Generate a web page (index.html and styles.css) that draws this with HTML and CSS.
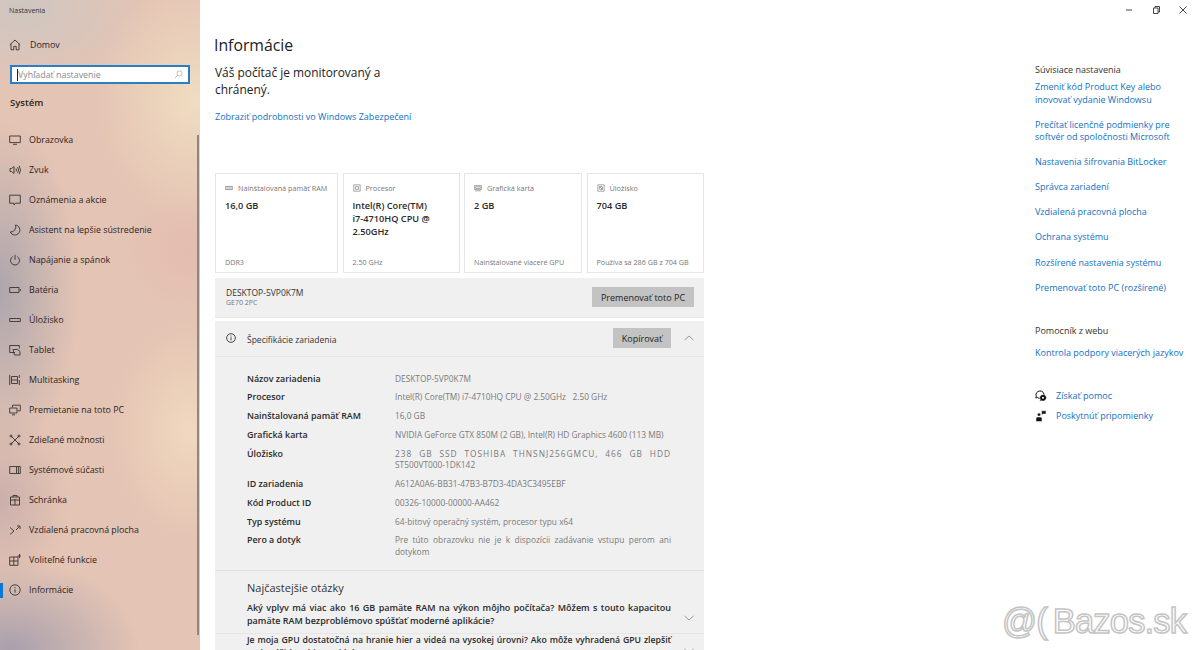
FILE: index.html
```html
<!DOCTYPE html>
<html lang="sk">
<head>
    <meta charset="UTF-8">
    <title>Nastavenia</title>
    <link rel="stylesheet" href="styles.css">
</head>
<body>
    <div class="window">
        <aside class="sidebar">
            <div class="app-title">Nastavenia</div>
            <a class="nav-item home">
                <svg class="nav-icon" viewBox="0 0 12 12"><path d="M.8 5.800 6 1l5.200 4.800M2 4.800v6h2.800V7.400h2.400v3.400H10v-6"/></svg>
                <span>Domov</span>
            </a>
            <div class="search">
                <span class="caret"></span>
                <span class="search-text">Vyhľadať nastavenie</span>
                <svg class="search-icon" viewBox="0 0 12 12"><circle cx="7.400" cy="4.600" r="3.400"/><path d="M5 7 1.200 10.800"/></svg>
            </div>
            <div class="section-name">Systém</div>
            <nav class="nav-list">
                <a class="nav-item">
                    <svg class="nav-icon" viewBox="0 0 12 12"><path d="M.7 2h10.600v6.600H.7zM4 10.300h4"/></svg>
                    <span>Obrazovka</span>
                </a>
                <a class="nav-item">
                    <svg class="nav-icon" viewBox="0 0 12 12"><path d="M1 4.500h1.500L5 2.500v7l-2.500-2H1zM7 4.500q1 1.500 0 3M8.600 3q2 3 0 6M10.200 1.800q2.600 4.200 0 8.400"/></svg>
                    <span>Zvuk</span>
                </a>
                <a class="nav-item">
                    <svg class="nav-icon" viewBox="0 0 12 12"><path d="M.7 1.200h10.600v8H6.600L5 11V9.200H.7z"/></svg>
                    <span>Oznámenia a akcie</span>
                </a>
                <a class="nav-item">
                    <svg class="nav-icon" viewBox="0 0 12 12"><path d="M6.500 1a5 5 0 1 1-5.200 7A5.200 5.200 0 0 0 6.500 1z"/></svg>
                    <span>Asistent na lepšie sústredenie</span>
                </a>
                <a class="nav-item">
                    <svg class="nav-icon" viewBox="0 0 12 12"><path d="M3.700 2.600a4.500 4.500 0 1 0 4.600 0M6 .8v5"/></svg>
                    <span>Napájanie a spánok</span>
                </a>
                <a class="nav-item">
                    <svg class="nav-icon" viewBox="0 0 12 12"><path d="M.7 3.500h9.300v5H.7zM11.300 5v2"/></svg>
                    <span>Batéria</span>
                </a>
                <a class="nav-item">
                    <svg class="nav-icon" viewBox="0 0 12 12"><path d="M.7 4.500h10.600v3H.7z"/></svg>
                    <span>Úložisko</span>
                </a>
                <a class="nav-item">
                    <svg class="nav-icon" viewBox="0 0 12 12"><path d="M6 8.500H.7v-7h9.600v3M4 5.500h4.500l2.500 2v3.500H5.500z"/></svg>
                    <span>Tablet</span>
                </a>
                <a class="nav-item">
                    <svg class="nav-icon" viewBox="0 0 12 12"><path d="M2.500 2.500h6v7h-6zM.7 1v10M10.300 1v3M10.300 6v5M2.500 6h6"/></svg>
                    <span>Multitasking</span>
                </a>
                <a class="nav-item">
                    <svg class="nav-icon" viewBox="0 0 12 12"><path d="M3.500 3.500V1.200h7.800v5.600H8.500M.7 4h7.300v5H.7zM3 10.800h3"/></svg>
                    <span>Premietanie na toto PC</span>
                </a>
                <a class="nav-item">
                    <svg class="nav-icon" viewBox="0 0 12 12"><path d="M2 2l8 8M10 2l-8 8"/><circle cx="2" cy="2" r="1"/><circle cx="10" cy="2" r="1"/><circle cx="2" cy="10" r="1"/><circle cx="10" cy="10" r="1"/></svg>
                    <span>Zdieľané možnosti</span>
                </a>
                <a class="nav-item">
                    <svg class="nav-icon" viewBox="0 0 12 12"><path d="M.7 2.500h10.600v7H.7zM7.500 2.500v7M9.400 2.500v7"/></svg>
                    <span>Systémové súčasti</span>
                </a>
                <a class="nav-item">
                    <svg class="nav-icon" viewBox="0 0 12 12"><path d="M1.500 3h9v8h-9zM4 3V1.500h4V3M6 5v6M1.500 6h9"/></svg>
                    <span>Schránka</span>
                </a>
                <a class="nav-item">
                    <svg class="nav-icon" viewBox="0 0 12 12"><path d="M1 3.500 5 7 1 10.500M7 6l3.500-3.500M8 2h3v3"/></svg>
                    <span>Vzdialená pracovná plocha</span>
                </a>
                <a class="nav-item">
                    <svg class="nav-icon" viewBox="0 0 12 12"><path d="M.7 3h8.300v8.300H.7zM.7 7h8.300M4.800 3v8.300M10.500 0v4M8.500 2h3.500"/></svg>
                    <span>Voliteľné funkcie</span>
                </a>
                <a class="nav-item current">
                    <svg class="nav-icon" viewBox="0 0 12 12"><circle cx="6" cy="6" r="5.200"/><path d="M6 5.200v3.500M6 3v1.200"/></svg>
                    <span>Informácie</span>
                </a>
            </nav>
            <div class="side-scroll"></div>
        </aside>

        <main class="content">
            <h1 class="page-title">Informácie</h1>
            <p class="protect-text">Váš počítač je monitorovaný a chránený.</p>
            <a class="link details-link">Zobraziť podrobnosti vo Windows Zabezpečení</a>

            <div class="cards">
                <div class="card">
                    <div class="card-head">
                        <svg class="card-icon" viewBox="0 0 10 10"><path d="M.5 3h9v4h-9zM2.500 3v4M5 3v4M7.500 3v4"/></svg>
                        <span>Nainštalovaná pamäť RAM</span>
                    </div>
                    <div class="card-value">16,0 GB</div>
                    <div class="card-foot">DDR3</div>
                </div>
                <div class="card">
                    <div class="card-head">
                        <svg class="card-icon" viewBox="0 0 10 10"><path d="M1 1h8v8H1zM3.200 3.200h3.600v3.600H3.200z"/></svg>
                        <span>Procesor</span>
                    </div>
                    <div class="card-value">Intel(R) Core(TM) i7-4710HQ CPU @ 2.50GHz</div>
                    <div class="card-foot">2.50 GHz</div>
                </div>
                <div class="card">
                    <div class="card-head">
                        <svg class="card-icon" viewBox="0 0 10 10"><path d="M.5 2h9v5h-9zM2 3.500h6v2H2zM1.500 8.500h7"/></svg>
                        <span>Grafická karta</span>
                    </div>
                    <div class="card-value">2 GB</div>
                    <div class="card-foot">Nainštalované viaceré GPU</div>
                </div>
                <div class="card">
                    <div class="card-head">
                        <svg class="card-icon" viewBox="0 0 10 10"><path d="M1 1h8v8H1zM2.500 2.500l5 5"/><circle cx="5" cy="5" r="2.200"/></svg>
                        <span>Úložisko</span>
                    </div>
                    <div class="card-value">704 GB</div>
                    <div class="card-foot">Používa sa 286 GB z 704 GB</div>
                </div>
            </div>

            <div class="pc-band">
                <div>
                    <div class="pc-name">DESKTOP-5VP0K7M</div>
                    <div class="pc-model">GE70 2PC</div>
                </div>
                <button class="gray-btn">Premenovať toto PC</button>
            </div>

            <section class="spec-panel">
                <div class="spec-head">
                    <svg class="spec-icon" viewBox="0 0 12 12"><circle cx="6" cy="6" r="5.200"/><path d="M6 5.200v3.500M6 3v1.200"/></svg>
                    <span class="spec-title">Špecifikácie zariadenia</span>
                    <button class="gray-btn copy-btn">Kopírovať</button>
                    <svg class="chevron up" viewBox="0 0 10 6"><path d="M.5 5 5 1l4.500 4"/></svg>
                </div>
                <dl class="spec-list">
                    <dt>Názov zariadenia</dt>
                    <dd>DESKTOP-5VP0K7M</dd>
                    <dt>Procesor</dt>
                    <dd>Intel(R) Core(TM) i7-4710HQ CPU @ 2.50GHz &nbsp; 2.50 GHz</dd>
                    <dt>Nainštalovaná pamäť RAM</dt>
                    <dd>16,0 GB</dd>
                    <dt>Grafická karta</dt>
                    <dd>NVIDIA GeForce GTX 850M (2 GB), Intel(R) HD Graphics 4600 (113 MB)</dd>
                    <dt>Úložisko</dt>
                    <dd class="justified"><span class="spaced">238 GB SSD TOSHIBA THNSNJ256GMCU, 466 GB HDD</span> <span class="no-break">ST500VT000-1DK142</span></dd>
                    <dt>ID zariadenia</dt>
                    <dd>A612A0A6-BB31-47B3-B7D3-4DA3C3495EBF</dd>
                    <dt>Kód Product ID</dt>
                    <dd>00326-10000-00000-AA462</dd>
                    <dt>Typ systému</dt>
                    <dd>64-bitový operačný systém, procesor typu x64</dd>
                    <dt>Pero a dotyk</dt>
                    <dd class="justified">Pre túto obrazovku nie je k dispozícii zadávanie vstupu perom ani dotykom</dd>
                </dl>
                <div class="faq">
                    <h2 class="faq-title">Najčastejšie otázky</h2>
                    <div class="faq-row">
                        <p>Aký vplyv má viac ako 16 GB pamäte RAM na výkon môjho počítača? Môžem s touto kapacitou pamäte RAM bezproblémovo spúšťať moderné aplikácie?</p>
                        <svg class="chevron" viewBox="0 0 10 6"><path d="M.5 1 5 5l4.500-4"/></svg>
                    </div>
                    <div class="faq-row second">
                        <p>Je moja GPU dostatočná na hranie hier a videá na vysokej úrovni? Ako môže vyhradená GPU zlepšiť moje zážitky z hier a videí?</p>
                        <svg class="chevron" viewBox="0 0 10 6"><path d="M.5 1 5 5l4.500-4"/></svg>
                    </div>
                </div>
            </section>
        </main>

        <aside class="related">
            <div class="win-controls">
                <svg viewBox="0 0 10 10"><path d="M2 5h6"/></svg>
                <svg viewBox="0 0 10 10"><path d="M2.500 3h4.500v5.500H2.500zM4 3V1.500h4.500V7H7"/></svg>
                <svg viewBox="0 0 10 10"><path d="M1.500 1.500l7 7M8.500 1.500l-7 7"/></svg>
            </div>
            <div class="related-group">
                <div class="related-title">Súvisiace nastavenia</div>
                <a class="link">Zmeniť kód Product Key alebo inovovať vydanie Windowsu</a>
                <a class="link">Prečítať licenčné podmienky pre softvér od spoločnosti Microsoft</a>
                <a class="link">Nastavenia šifrovania BitLocker</a>
                <a class="link">Správca zariadení</a>
                <a class="link">Vzdialená pracovná plocha</a>
                <a class="link">Ochrana systému</a>
                <a class="link">Rozšírené nastavenia systému</a>
                <a class="link">Premenovať toto PC (rozšírené)</a>
            </div>
            <div class="related-group web-help">
                <div class="related-title">Pomocník z webu</div>
                <a class="link">Kontrola podpory viacerých jazykov</a>
            </div>
            <div class="help-links">
                <a class="link help-row">
                    <svg viewBox="0 0 12 12"><path class="outline" d="M4.800 1A3.800 3.800 0 0 0 1.300 6.300L.8 8l1.800-.5A3.800 3.800 0 1 0 4.800 1z"/><path class="solid" d="M8 4.500a3.300 3.300 0 1 1-1.500 6.200l-1.800.6.500-1.800A3.300 3.300 0 0 1 8 4.500z"/><circle class="dot" cx="8" cy="7.800" r="1"/></svg>
                    <span>Získať pomoc</span>
                </a>
                <a class="link help-row">
                    <svg viewBox="0 0 12 12"><path class="solid" d="M1 8.500q0-1.500 1.500-1.500h3q1.500 0 1.500 1.500v3H1zM2.300 4.600a1.700 1.700 0 1 1 3.400 0 1.700 1.700 0 0 1-3.400 0zM6.500 .8h4.500v3.200H8.200L6.800 5.200z"/></svg>
                    <span>Poskytnúť pripomienky</span>
                </a>
            </div>
            <div class="main-scroll"></div>
        </aside>
    </div>
    <div class="watermark">@( Bazos.sk</div>
</body>
</html>
```

FILE: styles.css
```css
* {
    box-sizing: border-box;
}
html, body {
    margin: 0;
    height: 650px;
    overflow: hidden;
    background-color: white;
}
body {
    font-family: "Open Sans", "Noto Sans", Arial, sans-serif;
    font-size: 9px;
    color: #222;
}
a {
    display: block;
}
.window {
    display: flex;
    height: 650px;
    position: relative;
}

/* left column */
.sidebar {
    width: 200px;
    flex-shrink: 0;
    position: relative;
    overflow: hidden;
    padding-top: 6px;
    background-color: #e4c4b4;
    background-image:
        radial-gradient(ellipse 80px 170px at 0 290px, rgba(170,164,172,0.95), rgba(170,164,172,0)),
        radial-gradient(ellipse 130px 90px at 10px 650px, rgba(165,158,172,0.95), rgba(165,158,172,0)),
        radial-gradient(ellipse 100px 120px at 195px 100px, rgba(240,220,192,1), rgba(240,220,192,0)),
        radial-gradient(ellipse 80px 110px at 190px 430px, rgba(240,216,190,1), rgba(240,216,190,0)),
        radial-gradient(ellipse 60px 60px at 185px 250px, rgba(228,182,170,0.5), rgba(228,182,170,0)),
        radial-gradient(ellipse 130px 80px at 20px 10px, rgba(205,198,194,0.95), rgba(205,198,194,0)),
        radial-gradient(ellipse 70px 90px at 0 500px, rgba(196,170,168,0.8), rgba(196,170,168,0));
}
.app-title {
    font-size: 7px;
    line-height: 9px;
    padding-left: 9px;
    color: #333;
}
.nav-item {
    display: flex;
    align-items: center;
    height: 30px;
    padding-left: 9px;
    font-size: 8.850px;
    color: #2c2422;
    position: relative;
}
.nav-item span {
    margin-left: 8px;
}
.nav-item.home {
    margin-top: 15px;
    height: 30px;
}
.nav-item.home span {
    margin-left: 9px;
}
.nav-icon {
    width: 12px;
    height: 12px;
    fill: none;
    stroke: #3a3432;
    stroke-width: 0.900;
    flex-shrink: 0;
}
.nav-item.current::before {
    content: "";
    position: absolute;
    left: 0;
    top: 8px;
    width: 3px;
    height: 15px;
    background-color: #0a78d7;
}
.search {
    display: flex;
    align-items: center;
    height: 19px;
    margin: 5px 10px 0;
    padding: 0 5px 0 6px;
    background-color: white;
    border: 2px solid #2a7fc4;
}
.caret {
    width: 1px;
    height: 12px;
    background-color: #222;
    margin-left: -1px;
}
.search-text {
    flex: 1;
    color: #8a8a8a;
    font-size: 8.850px;
}
.search-icon {
    width: 9px;
    height: 9px;
    fill: none;
    stroke: #aaa;
}
.section-name {
    font-size: 9.500px;
    font-weight: 600;
    line-height: 13px;
    padding-left: 10px;
    margin-top: 12px;
    color: #2a2422;
}
.nav-list {
    margin-top: 16px;
}
.side-scroll {
    position: absolute;
    right: 1px;
    top: 135px;
    bottom: 15px;
    width: 2px;
    background-color: #8f8683;
}

/* middle column */
.content {
    width: 504px;
    flex-shrink: 0;
    padding: 36px 0 0 15px;
    overflow: hidden;
}
.page-title {
    margin: 0 0 0 -1px;
    font-size: 15.800px;
    font-weight: 400;
    line-height: 19px;
    color: #222;
}
.protect-text {
    margin: 9px 0 0;
    width: 180px;
    font-size: 11.900px;
    line-height: 17px;
    color: #222;
}
.link {
    color: #1170c4;
    font-size: 9px;
    line-height: 12.500px;
}
.details-link {
    margin-top: 13px;
}
.cards {
    display: grid;
    grid-template-columns: 123px 117px 118px 117.500px;
    gap: 4.500px;
    margin-top: 49px;
}
.card {
    height: 100px;
    border: 1px solid #e6e6e6;
    padding: 9px 9px 0;
    display: flex;
    flex-direction: column;
}
.card-head {
    display: flex;
    align-items: center;
    gap: 5px;
    font-size: 7.250px;
    line-height: 10px;
    color: #777;
    white-space: nowrap;
}
.card-icon {
    width: 8px;
    height: 8px;
    fill: none;
    stroke: #777;
    stroke-width: 0.800;
    flex-shrink: 0;
}
.card-value {
    margin-top: 6px;
    padding-right: 14px;
    font-size: 9.200px;
    font-weight: 600;
    line-height: 13px;
    color: #2a2a2a;
}
.card-foot {
    margin-top: auto;
    margin-bottom: 5px;
    font-size: 7.200px;
    line-height: 10px;
    color: #777;
    white-space: nowrap;
}
.pc-band {
    display: flex;
    justify-content: space-between;
    align-items: center;
    height: 40px;
    margin-top: 5px;
    padding: 0 10px 0 11px;
    background-color: #f0f0f0;
    border-bottom: 1px solid #e6e6e6;
}
.pc-name {
    font-size: 8.500px;
    line-height: 11px;
    color: #333;
}
.pc-model {
    font-size: 7px;
    line-height: 9px;
    color: #777;
}
.gray-btn {
    height: 20px;
    padding: 0;
    width: 102px;
    border: none;
    background-color: #c3c3c3;
    font-family: inherit;
    font-size: 9px;
    color: #222;
}
.spec-panel {
    margin-top: 3px;
    background-color: #f0f0f0;
}
.spec-head {
    display: flex;
    align-items: center;
    height: 36px;
    padding-left: 11px;
    border-bottom: 1px solid #e6e6e6;
}
.spec-icon {
    width: 10px;
    height: 10px;
    fill: none;
    stroke: #222;
    flex-shrink: 0;
}
.spec-title {
    flex: 1;
    margin-left: 11px;
    padding-top: 2px;
    font-size: 8.500px;
    color: #333;
}
.copy-btn {
    width: 58px;
}
.chevron {
    width: 10px;
    height: 6px;
    fill: none;
    stroke: #999;
    flex-shrink: 0;
}
.chevron.up {
    margin: 0 10px 0 13px;
}
.spec-list {
    display: grid;
    grid-template-columns: 148px 276px;
    row-gap: 7.200px;
    margin: 0;
    padding: 16px 0 12px 32px;
    border-bottom: 1px solid #e0e0e0;
    line-height: 11.600px;
}
.spec-list dt {
    font-size: 8.900px;
    font-weight: 600;
    color: #2a2a2a;
}
.spec-list dd {
    margin: 0;
    font-size: 8.330px;
    color: #7a7a7a;
}
.spec-list .justified {
    text-align: justify;
}
.spaced {
    letter-spacing: 1px;
}
.no-break {
    white-space: nowrap;
}
.faq {
    padding-left: 32px;
}
.faq-title {
    margin: 0;
    padding-top: 9px;
    font-size: 11px;
    font-weight: 400;
    line-height: 15px;
    color: #333;
}
.faq-row {
    display: flex;
    align-items: center;
    margin-left: -32px;
    padding: 6px 0 6px 32px;
    border-bottom: 1px solid #e6e6e6;
}
.faq-row p {
    width: 424px;
    margin: 0;
    font-size: 9px;
    font-weight: 600;
    line-height: 13px;
    text-align: justify;
    color: #2a2a2a;
}
.faq-row .chevron {
    margin: 9px 0 0 13px;
}
.faq-row.second {
    padding-top: 0;
}
.faq-row.second p {
    font-size: 8.700px;
}

/* right column */
.related {
    flex: 1;
    position: relative;
    padding-left: 331px;
    overflow: hidden;
}
.win-controls {
    display: flex;
    gap: 17px;
    position: absolute;
    right: 12px;
    top: 5px;
}
.win-controls svg {
    width: 10px;
    height: 10px;
    fill: none;
    stroke: #333;
    stroke-width: 0.900;
}
.related-group {
    padding-top: 63px;
    width: 160px;
}
.related-title {
    font-size: 9px;
    line-height: 13px;
    color: #333;
    margin-bottom: 5px;
}
.related-group .link + .link {
    margin-top: 12.600px;
}
.web-help {
    padding-top: 30px;
}
.web-help .related-title {
    margin-bottom: 10px;
}
.help-links {
    margin-top: 30px;
    display: flex;
    flex-direction: column;
    gap: 7.500px;
}
.help-row {
    display: flex;
    align-items: center;
    gap: 9px;
}
.help-row svg {
    width: 12px;
    height: 12px;
    flex-shrink: 0;
}
.solid {
    fill: #111;
    stroke: white;
    stroke-width: 0.500;
}
.outline {
    fill: white;
    stroke: #111;
    stroke-width: 1;
}
.dot {
    fill: white;
}
.main-scroll {
    position: absolute;
    left: 497px;
    top: 70px;
    width: 2px;
    height: 412px;
    background-color: #8a8a8a;
}
.watermark {
    position: absolute;
    left: 1002px;
    top: 600px;
    font-family: "Liberation Sans", Arial, sans-serif;
    font-size: 34.500px;
    letter-spacing: -0.800px;
    word-spacing: -3px;
    line-height: 42px;
    white-space: nowrap;
    color: white;
    -webkit-text-stroke: 1.500px #c4c4c4;
}
```
